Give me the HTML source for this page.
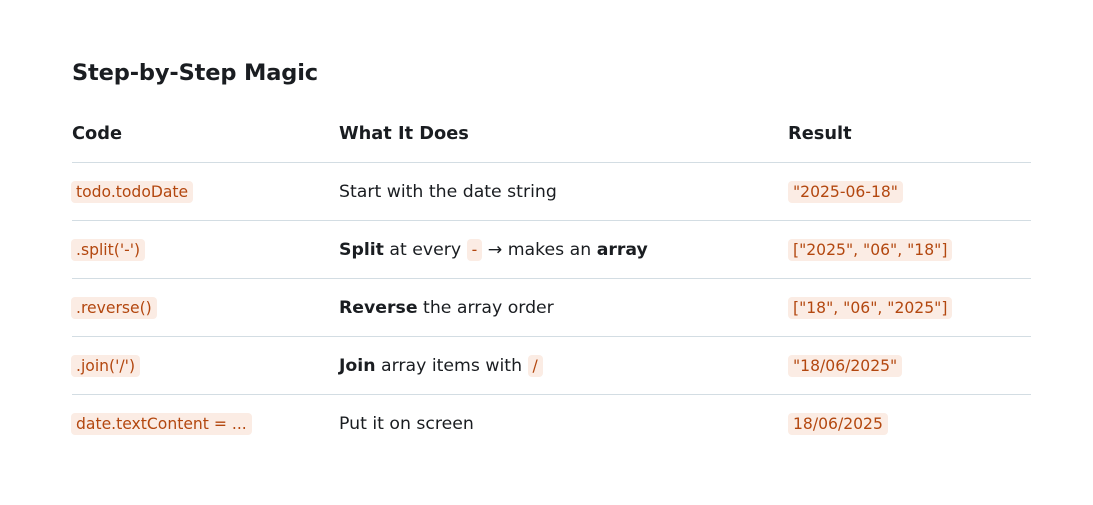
<!DOCTYPE html>
<html><head><style>
body{margin:0;background:#fff;font-family:"DejaVu Sans",sans-serif;color:#1a1d21;width:1093px;height:505px;overflow:hidden}
h2{position:absolute;left:72px;top:57px;margin:0;font-size:22.5px;font-weight:bold;line-height:32px;letter-spacing:-0.15px}
table{position:absolute;left:72px;top:103px;width:959px;border-collapse:collapse;font-size:17.3px}
th{text-align:left;font-weight:bold;height:59px;padding:3px 0 0;box-sizing:border-box;border-bottom:1px solid #d3dde3;font-size:17.8px}
td{height:58px;padding:2px 0 0;box-sizing:border-box;border-bottom:1px solid #d3dde3}
tr:last-child td{border-bottom:none}
code{font-family:"DejaVu Sans",sans-serif;font-size:15.6px;color:#b3470f;background:#fbece4;border-radius:4px;padding:2px 5px}
td:first-child code{margin-left:-1px}
</style></head><body>
<h2>Step-by-Step Magic</h2>
<table>
<tr><th style="width:267px">Code</th><th style="width:449px">What It Does</th><th>Result</th></tr>
<tr><td><code>todo.todoDate</code></td><td>Start with the date string</td><td><code>"2025-06-18"</code></td></tr>
<tr><td><code>.split('-')</code></td><td><b>Split</b> at every <code>-</code> → makes an <b>array</b></td><td><code>["2025", "06", "18"]</code></td></tr>
<tr><td><code>.reverse()</code></td><td><b>Reverse</b> the array order</td><td><code>["18", "06", "2025"]</code></td></tr>
<tr><td><code>.join('/')</code></td><td><b>Join</b> array items with <code>/</code></td><td><code>"18/06/2025"</code></td></tr>
<tr><td><code>date.textContent = ...</code></td><td>Put it on screen</td><td><code>18/06/2025</code></td></tr>
</table>
</body></html>
